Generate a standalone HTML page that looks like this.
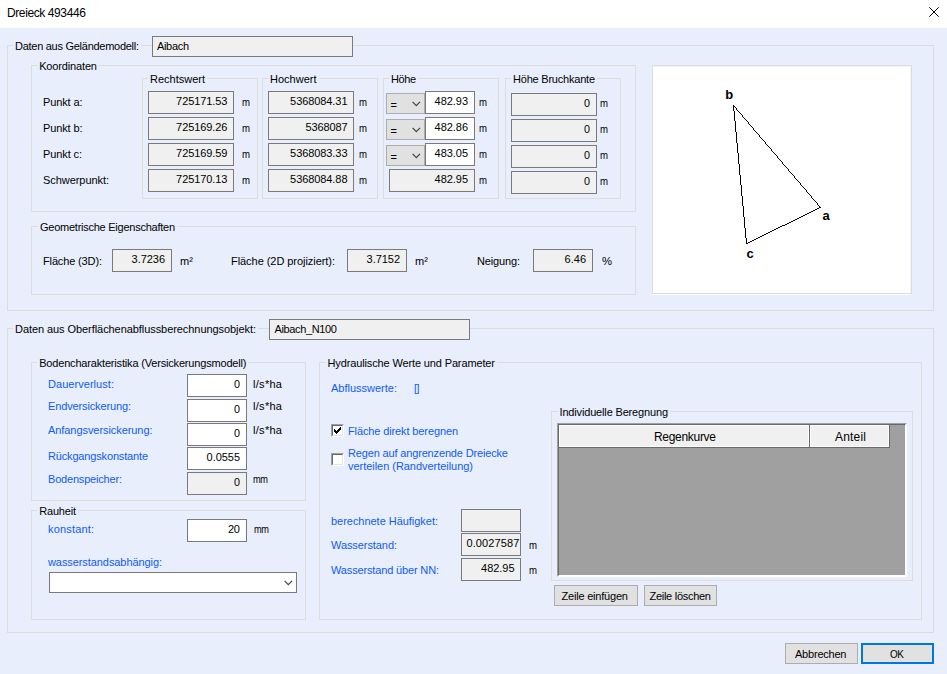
<!DOCTYPE html>
<html lang="de"><head><meta charset="utf-8"><title>Dreieck 493446</title>
<style>
html,body{margin:0;padding:0}
body{width:947px;height:674px;background:#e8eefc;position:relative;overflow:hidden;font-family:'Liberation Sans',sans-serif;font-size:11px;color:#000}
.b{position:absolute;box-sizing:content-box}
.t{position:absolute;white-space:nowrap;display:block}
.hd{background:#f0f0f0;border:1px solid #fff;outline:0;box-shadow:1px 0 0 0 #696969,0 1px 0 0 #696969,1px 1px 0 0 #696969}
.cbo{width:11px;height:11px;border-style:solid;border-width:1px;border-color:#a0a0a0 #fff #fff #a0a0a0}
.cb{width:9px;height:9px;background:#fff;border-style:solid;border-width:1px;border-color:#696969 #e3e3e3 #e3e3e3 #696969}
</style></head>
<body>
<div class="b" style="left:0;top:0;width:947px;height:28px;background:#fff"></div>
<svg class="b" style="left:929px;top:7px" width="10" height="10" viewBox="0 0 10 10"><path d="M0.3 0.3 L9.7 9.7 M9.7 0.3 L0.3 9.7" stroke="#000" stroke-width="1" fill="none"/></svg>
<div class="b" style="left:7px;top:45px;width:925px;height:264px;border:1px solid #dcdcdc;"></div>
<div class="b" style="left:152px;top:36px;width:199px;height:19px;background:#f0f0f0;border:1px solid #7a7a7a;"></div>
<div class="b" style="left:31px;top:65px;width:603px;height:145px;border:1px solid #dcdcdc;"></div>
<div class="b" style="left:142px;top:78px;width:114px;height:119px;border:1px solid #dcdcdc;"></div>
<div class="b" style="left:262px;top:78px;width:114px;height:119px;border:1px solid #dcdcdc;"></div>
<div class="b" style="left:383px;top:78px;width:114px;height:119px;border:1px solid #dcdcdc;"></div>
<div class="b" style="left:505px;top:78px;width:114px;height:119px;border:1px solid #dcdcdc;"></div>
<div class="b" style="left:148px;top:91px;width:84px;height:21px;background:#f0f0f0;border:1px solid #7a7a7a;"></div>
<div class="b" style="left:268px;top:91px;width:84px;height:21px;background:#f0f0f0;border:1px solid #7a7a7a;"></div>
<div class="b" style="left:386px;top:93px;width:37px;height:19px;background:#e1e1e1;border:1px solid #adadad;"></div>
<svg class="b" style="left:411.8px;top:101.2px" width="9" height="6" viewBox="0 0 9 6"><path d="M0.6 0.9 L4.3 4.6 L8 0.9" stroke="#444" stroke-width="1.25" fill="none"/></svg>
<div class="b" style="left:425px;top:91px;width:48px;height:21px;background:#fff;border:1px solid #7a7a7a;"></div>
<div class="b" style="left:511px;top:93px;width:84px;height:21px;background:#f0f0f0;border:1px solid #7a7a7a;"></div>
<div class="b" style="left:148px;top:117px;width:84px;height:21px;background:#f0f0f0;border:1px solid #7a7a7a;"></div>
<div class="b" style="left:268px;top:117px;width:84px;height:21px;background:#f0f0f0;border:1px solid #7a7a7a;"></div>
<div class="b" style="left:386px;top:119px;width:37px;height:19px;background:#e1e1e1;border:1px solid #adadad;"></div>
<svg class="b" style="left:411.8px;top:127.2px" width="9" height="6" viewBox="0 0 9 6"><path d="M0.6 0.9 L4.3 4.6 L8 0.9" stroke="#444" stroke-width="1.25" fill="none"/></svg>
<div class="b" style="left:425px;top:117px;width:48px;height:21px;background:#fff;border:1px solid #7a7a7a;"></div>
<div class="b" style="left:511px;top:119px;width:84px;height:21px;background:#f0f0f0;border:1px solid #7a7a7a;"></div>
<div class="b" style="left:148px;top:143px;width:84px;height:21px;background:#f0f0f0;border:1px solid #7a7a7a;"></div>
<div class="b" style="left:268px;top:143px;width:84px;height:21px;background:#f0f0f0;border:1px solid #7a7a7a;"></div>
<div class="b" style="left:386px;top:145px;width:37px;height:19px;background:#e1e1e1;border:1px solid #adadad;"></div>
<svg class="b" style="left:411.8px;top:153.2px" width="9" height="6" viewBox="0 0 9 6"><path d="M0.6 0.9 L4.3 4.6 L8 0.9" stroke="#444" stroke-width="1.25" fill="none"/></svg>
<div class="b" style="left:425px;top:143px;width:48px;height:21px;background:#fff;border:1px solid #7a7a7a;"></div>
<div class="b" style="left:511px;top:145px;width:84px;height:21px;background:#f0f0f0;border:1px solid #7a7a7a;"></div>
<div class="b" style="left:148px;top:169px;width:84px;height:21px;background:#f0f0f0;border:1px solid #7a7a7a;"></div>
<div class="b" style="left:268px;top:169px;width:84px;height:21px;background:#f0f0f0;border:1px solid #7a7a7a;"></div>
<div class="b" style="left:389px;top:169px;width:84px;height:21px;background:#f0f0f0;border:1px solid #7a7a7a;"></div>
<div class="b" style="left:511px;top:171px;width:84px;height:21px;background:#f0f0f0;border:1px solid #7a7a7a;"></div>
<div class="b" style="left:31px;top:226px;width:603px;height:67px;border:1px solid #dcdcdc;"></div>
<div class="b" style="left:112px;top:249px;width:58px;height:21px;background:#f0f0f0;border:1px solid #7a7a7a;"></div>
<div class="b" style="left:347px;top:249px;width:58px;height:21px;background:#f0f0f0;border:1px solid #7a7a7a;"></div>
<div class="b" style="left:533px;top:249px;width:58px;height:21px;background:#f0f0f0;border:1px solid #7a7a7a;"></div>
<div class="b" style="left:652px;top:65px;width:258px;height:227px;background:#fff;border:1px solid #dcdcdc"></div>
<div class="b" style="left:652px;top:294px;width:258px;height:1px;background:#fff"></div>
<div class="b" style="left:653px;top:66px;width:258px;height:1px;background:#f1f4fd"></div>
<div class="b" style="left:910px;top:66px;width:1px;height:227px;background:#f1f4fd"></div>
<svg class="b" style="left:652px;top:65px" width="260" height="229" viewBox="0 0 260 229" shape-rendering="crispEdges"><path d="M81 40h1v1h-1zM81 41h2v1h-2zM81 42h1v1h-1zM83 42h1v1h-1zM81 43h1v1h-1zM84 43h1v1h-1zM81 44h1v1h-1zM84 44h1v1h-1zM81 45h1v1h-1zM85 45h1v1h-1zM82 46h1v1h-1zM86 46h1v1h-1zM82 47h1v1h-1zM87 47h1v1h-1zM82 48h1v1h-1zM88 48h1v1h-1zM82 49h1v1h-1zM89 49h1v1h-1zM82 50h1v1h-1zM90 50h1v1h-1zM82 51h1v1h-1zM90 51h1v1h-1zM82 52h1v1h-1zM91 52h1v1h-1zM82 53h1v1h-1zM92 53h1v1h-1zM82 54h1v1h-1zM93 54h1v1h-1zM82 55h1v1h-1zM94 55h1v1h-1zM83 56h1v1h-1zM95 56h1v1h-1zM83 57h1v1h-1zM96 57h1v1h-1zM83 58h1v1h-1zM96 58h1v1h-1zM83 59h1v1h-1zM97 59h1v1h-1zM83 60h1v1h-1zM98 60h1v1h-1zM83 61h1v1h-1zM99 61h1v1h-1zM83 62h1v1h-1zM100 62h1v1h-1zM83 63h1v1h-1zM101 63h1v1h-1zM83 64h1v1h-1zM101 64h1v1h-1zM83 65h1v1h-1zM102 65h1v1h-1zM83 66h1v1h-1zM103 66h1v1h-1zM84 67h1v1h-1zM104 67h1v1h-1zM84 68h1v1h-1zM105 68h1v1h-1zM84 69h1v1h-1zM106 69h1v1h-1zM84 70h1v1h-1zM107 70h1v1h-1zM84 71h1v1h-1zM107 71h1v1h-1zM84 72h1v1h-1zM108 72h1v1h-1zM84 73h1v1h-1zM109 73h1v1h-1zM84 74h1v1h-1zM110 74h1v1h-1zM84 75h1v1h-1zM111 75h1v1h-1zM84 76h1v1h-1zM112 76h1v1h-1zM84 77h1v1h-1zM113 77h1v1h-1zM85 78h1v1h-1zM113 78h1v1h-1zM85 79h1v1h-1zM114 79h1v1h-1zM85 80h1v1h-1zM115 80h1v1h-1zM85 81h1v1h-1zM116 81h1v1h-1zM85 82h1v1h-1zM117 82h1v1h-1zM85 83h1v1h-1zM118 83h1v1h-1zM85 84h1v1h-1zM119 84h1v1h-1zM85 85h1v1h-1zM119 85h1v1h-1zM85 86h1v1h-1zM120 86h1v1h-1zM85 87h1v1h-1zM121 87h1v1h-1zM86 88h1v1h-1zM122 88h1v1h-1zM86 89h1v1h-1zM123 89h1v1h-1zM86 90h1v1h-1zM124 90h1v1h-1zM86 91h1v1h-1zM125 91h1v1h-1zM86 92h1v1h-1zM125 92h1v1h-1zM86 93h1v1h-1zM126 93h1v1h-1zM86 94h1v1h-1zM127 94h1v1h-1zM86 95h1v1h-1zM128 95h1v1h-1zM86 96h1v1h-1zM129 96h1v1h-1zM86 97h1v1h-1zM130 97h1v1h-1zM86 98h1v1h-1zM130 98h1v1h-1zM87 99h1v1h-1zM131 99h1v1h-1zM87 100h1v1h-1zM132 100h1v1h-1zM87 101h1v1h-1zM133 101h1v1h-1zM87 102h1v1h-1zM134 102h1v1h-1zM87 103h1v1h-1zM135 103h1v1h-1zM87 104h1v1h-1zM136 104h1v1h-1zM87 105h1v1h-1zM136 105h1v1h-1zM87 106h1v1h-1zM137 106h1v1h-1zM87 107h1v1h-1zM138 107h1v1h-1zM87 108h1v1h-1zM139 108h1v1h-1zM87 109h1v1h-1zM140 109h1v1h-1zM88 110h1v1h-1zM141 110h1v1h-1zM88 111h1v1h-1zM142 111h1v1h-1zM88 112h1v1h-1zM142 112h1v1h-1zM88 113h1v1h-1zM143 113h1v1h-1zM88 114h1v1h-1zM144 114h1v1h-1zM88 115h1v1h-1zM145 115h1v1h-1zM88 116h1v1h-1zM146 116h1v1h-1zM88 117h1v1h-1zM147 117h1v1h-1zM88 118h1v1h-1zM148 118h1v1h-1zM88 119h1v1h-1zM148 119h1v1h-1zM89 120h1v1h-1zM149 120h1v1h-1zM89 121h1v1h-1zM150 121h1v1h-1zM89 122h1v1h-1zM151 122h1v1h-1zM89 123h1v1h-1zM152 123h1v1h-1zM89 124h1v1h-1zM153 124h1v1h-1zM89 125h1v1h-1zM154 125h1v1h-1zM89 126h1v1h-1zM154 126h1v1h-1zM89 127h1v1h-1zM155 127h1v1h-1zM89 128h1v1h-1zM156 128h1v1h-1zM89 129h1v1h-1zM157 129h1v1h-1zM89 130h1v1h-1zM158 130h1v1h-1zM90 131h1v1h-1zM159 131h1v1h-1zM90 132h1v1h-1zM159 132h1v1h-1zM90 133h1v1h-1zM160 133h1v1h-1zM90 134h1v1h-1zM161 134h1v1h-1zM90 135h1v1h-1zM162 135h1v1h-1zM90 136h1v1h-1zM163 136h1v1h-1zM90 137h1v1h-1zM164 137h1v1h-1zM90 138h1v1h-1zM165 138h1v1h-1zM90 139h1v1h-1zM165 139h1v1h-1zM90 140h1v1h-1zM166 140h1v1h-1zM91 141h1v1h-1zM167 141h1v1h-1zM91 142h1v1h-1zM167 142h2v1h-2zM91 143h1v1h-1zM165 143h2v1h-2zM91 144h1v1h-1zM163 144h2v1h-2zM91 145h1v1h-1zM161 145h2v1h-2zM91 146h1v1h-1zM159 146h2v1h-2zM91 147h1v1h-1zM157 147h2v1h-2zM91 148h1v1h-1zM155 148h2v1h-2zM91 149h1v1h-1zM153 149h2v1h-2zM91 150h1v1h-1zM151 150h2v1h-2zM91 151h1v1h-1zM149 151h2v1h-2zM92 152h1v1h-1zM147 152h2v1h-2zM92 153h1v1h-1zM145 153h2v1h-2zM92 154h1v1h-1zM143 154h2v1h-2zM92 155h1v1h-1zM141 155h2v1h-2zM92 156h1v1h-1zM139 156h2v1h-2zM92 157h1v1h-1zM137 157h2v1h-2zM92 158h1v1h-1zM135 158h2v1h-2zM92 159h1v1h-1zM133 159h2v1h-2zM92 160h1v1h-1zM130 160h3v1h-3zM92 161h1v1h-1zM128 161h2v1h-2zM92 162h1v1h-1zM126 162h2v1h-2zM93 163h1v1h-1zM124 163h2v1h-2zM93 164h1v1h-1zM122 164h2v1h-2zM93 165h1v1h-1zM120 165h2v1h-2zM93 166h1v1h-1zM118 166h2v1h-2zM93 167h1v1h-1zM116 167h2v1h-2zM93 168h1v1h-1zM114 168h2v1h-2zM93 169h1v1h-1zM112 169h2v1h-2zM93 170h1v1h-1zM110 170h2v1h-2zM93 171h1v1h-1zM108 171h2v1h-2zM93 172h1v1h-1zM106 172h2v1h-2zM94 173h1v1h-1zM104 173h2v1h-2zM94 174h1v1h-1zM102 174h2v1h-2zM94 175h1v1h-1zM100 175h2v1h-2zM94 176h1v1h-1zM98 176h2v1h-2zM94 177h1v1h-1zM96 177h2v1h-2zM94 178h2v1h-2z" fill="#000"/></svg>
<div class="b" style="left:7px;top:328px;width:925px;height:303px;border:1px solid #dcdcdc;"></div>
<div class="b" style="left:269px;top:319px;width:199px;height:19px;background:#f0f0f0;border:1px solid #7a7a7a;"></div>
<div class="b" style="left:31px;top:362px;width:273px;height:137px;border:1px solid #dcdcdc;"></div>
<div class="b" style="left:187px;top:374px;width:58px;height:21px;background:#fff;border:1px solid #7a7a7a;"></div>
<div class="b" style="left:187px;top:399px;width:58px;height:21px;background:#fff;border:1px solid #7a7a7a;"></div>
<div class="b" style="left:187px;top:423px;width:58px;height:21px;background:#fff;border:1px solid #7a7a7a;"></div>
<div class="b" style="left:187px;top:447px;width:58px;height:21px;background:#fff;border:1px solid #7a7a7a;"></div>
<div class="b" style="left:187px;top:472px;width:58px;height:21px;background:#f0f0f0;border:1px solid #7a7a7a;"></div>
<div class="b" style="left:31px;top:510px;width:273px;height:108px;border:1px solid #dcdcdc;"></div>
<div class="b" style="left:187px;top:519px;width:58px;height:21px;background:#fff;border:1px solid #7a7a7a;"></div>
<div class="b" style="left:49px;top:572px;width:246px;height:19px;background:#fff;border:1px solid #7a7a7a;"></div>
<svg class="b" style="left:283.8px;top:580px" width="9" height="6" viewBox="0 0 9 6"><path d="M0.6 0.9 L4.3 4.6 L8 0.9" stroke="#444" stroke-width="1.25" fill="none"/></svg>
<div class="b" style="left:319px;top:362px;width:601px;height:256px;border:1px solid #dcdcdc;"></div>
<div class="b cbo" style="left:331px;top:424px"><div class="cb"></div></div>
<svg class="b" style="left:334px;top:427px" width="7" height="7" viewBox="0 0 7 7" shape-rendering="crispEdges"><path d="M0 2 v3 M1 3 v3 M2 4 v3 M3 3 v3 M4 2 v3 M5 1 v3 M6 0 v3" stroke="#000" stroke-width="1" fill="none" transform="translate(0.5,0)"/></svg>
<div class="b cbo" style="left:331px;top:453px"><div class="cb"></div></div>
<div class="b" style="left:461px;top:509px;width:58px;height:21px;background:#f0f0f0;border:1px solid #7a7a7a;"></div>
<div class="b" style="left:461px;top:533px;width:58px;height:21px;background:#f0f0f0;border:1px solid #7a7a7a;"></div>
<div class="b" style="left:461px;top:558px;width:58px;height:21px;background:#f0f0f0;border:1px solid #7a7a7a;"></div>
<div class="b" style="left:551px;top:411px;width:360px;height:168px;border:1px solid #dcdcdc;"></div>
<div class="b" style="left:557px;top:423px;width:348px;height:152px;border-style:solid;border-width:1px;border-color:#a0a0a0 #fff #fff #a0a0a0;"><div style="width:346px;height:150px;background:#a0a0a0;border-style:solid;border-width:1px;border-color:#696969 #fff #fff #696969;"></div></div>
<div class="b hd" style="left:559px;top:425px;width:248px;height:20px;"></div>
<div class="b hd" style="left:810px;top:425px;width:77px;height:20px;"></div>
<div class="b" style="left:554px;top:585px;width:82px;height:19px;background:#e1e1e1;border:1px solid #adadad;"></div>
<div class="b" style="left:644px;top:585px;width:71px;height:19px;background:#e1e1e1;border:1px solid #adadad;"></div>
<div class="b" style="left:785px;top:643px;width:71px;height:19px;background:#e1e1e1;border:1px solid #adadad;"></div>
<div class="b" style="left:861px;top:643px;width:69px;height:17px;background:#e1e1e1;border:2px solid #0078d7"></div>
<span class="t" style="font-size:12px;letter-spacing:-0.400px;color:#000;line-height:16px;height:16px;top:4.5px;left:7.00px;">Dreieck 493446</span>
<span class="t" style="font-size:11px;letter-spacing:-0.272px;color:#000;line-height:14px;height:14px;top:39.0px;background:#e8eefc;padding:0 2px;left:13.00px;">Daten aus Geländemodell:</span>
<span class="t" style="font-size:11px;letter-spacing:-0.328px;color:#000;line-height:14px;height:14px;top:39.0px;left:157.00px;">Aibach</span>
<span class="t" style="font-size:11px;letter-spacing:-0.153px;color:#000;line-height:14px;height:14px;top:59.0px;background:#e8eefc;padding:0 2px;left:37.20px;">Koordinaten</span>
<span class="t" style="font-size:11px;letter-spacing:-0.003px;color:#000;line-height:14px;height:14px;top:72.0px;background:#e8eefc;padding:0 2px;left:148.00px;">Rechtswert</span>
<span class="t" style="font-size:11px;letter-spacing:0.004px;color:#000;line-height:14px;height:14px;top:72.0px;background:#e8eefc;padding:0 2px;left:268.00px;">Hochwert</span>
<span class="t" style="font-size:11px;letter-spacing:-0.400px;color:#000;line-height:14px;height:14px;top:72.0px;background:#e8eefc;padding:0 2px;left:389.00px;">Höhe</span>
<span class="t" style="font-size:11px;letter-spacing:-0.214px;color:#000;line-height:14px;height:14px;top:72.0px;background:#e8eefc;padding:0 2px;left:511.00px;">Höhe Bruchkante</span>
<span class="t" style="font-size:11px;letter-spacing:-0.123px;color:#000;line-height:14px;height:14px;top:95.0px;left:43.00px;">Punkt a:</span>
<span class="t" style="font-size:11px;letter-spacing:-0.075px;color:#000;line-height:14px;height:14px;top:94.0px;right:719.58px;">725171.53</span>
<span class="t" style="font-size:11px;color:#000;line-height:14px;height:14px;top:95.0px;left:241.50px;transform:scaleX(0.8722);transform-origin:left center;">m</span>
<span class="t" style="font-size:11px;letter-spacing:-0.081px;color:#000;line-height:14px;height:14px;top:94.0px;right:599.58px;">5368084.31</span>
<span class="t" style="font-size:11px;color:#000;line-height:14px;height:14px;top:95.0px;left:359.00px;transform:scaleX(0.8722);transform-origin:left center;">m</span>
<span class="t" style="font-size:11px;color:#000;line-height:14px;height:14px;top:97.5px;left:390.50px;">=</span>
<span class="t" style="font-size:11px;letter-spacing:-0.051px;color:#000;line-height:14px;height:14px;top:94.0px;right:479.05px;">482.93</span>
<span class="t" style="font-size:11px;color:#000;line-height:14px;height:14px;top:95.0px;left:478.50px;transform:scaleX(0.8722);transform-origin:left center;">m</span>
<span class="t" style="font-size:11px;color:#000;line-height:14px;height:14px;top:96.0px;right:357.00px;transform:scaleX(0.9796);transform-origin:right center;">0</span>
<span class="t" style="font-size:11px;color:#000;line-height:14px;height:14px;top:96.0px;left:600.00px;transform:scaleX(0.8722);transform-origin:left center;">m</span>
<span class="t" style="font-size:11px;letter-spacing:-0.123px;color:#000;line-height:14px;height:14px;top:121.0px;left:43.00px;">Punkt b:</span>
<span class="t" style="font-size:11px;letter-spacing:-0.075px;color:#000;line-height:14px;height:14px;top:120.0px;right:719.58px;">725169.26</span>
<span class="t" style="font-size:11px;color:#000;line-height:14px;height:14px;top:121.0px;left:241.50px;transform:scaleX(0.8722);transform-origin:left center;">m</span>
<span class="t" style="font-size:11px;letter-spacing:-0.138px;color:#000;line-height:14px;height:14px;top:120.0px;right:599.64px;">5368087</span>
<span class="t" style="font-size:11px;color:#000;line-height:14px;height:14px;top:121.0px;left:359.00px;transform:scaleX(0.8722);transform-origin:left center;">m</span>
<span class="t" style="font-size:11px;color:#000;line-height:14px;height:14px;top:123.5px;left:390.50px;">=</span>
<span class="t" style="font-size:11px;letter-spacing:-0.051px;color:#000;line-height:14px;height:14px;top:120.0px;right:479.05px;">482.86</span>
<span class="t" style="font-size:11px;color:#000;line-height:14px;height:14px;top:121.0px;left:478.50px;transform:scaleX(0.8722);transform-origin:left center;">m</span>
<span class="t" style="font-size:11px;color:#000;line-height:14px;height:14px;top:122.0px;right:357.00px;transform:scaleX(0.9796);transform-origin:right center;">0</span>
<span class="t" style="font-size:11px;color:#000;line-height:14px;height:14px;top:122.0px;left:600.00px;transform:scaleX(0.8722);transform-origin:left center;">m</span>
<span class="t" style="font-size:11px;letter-spacing:-0.107px;color:#000;line-height:14px;height:14px;top:147.0px;left:43.00px;">Punkt c:</span>
<span class="t" style="font-size:11px;letter-spacing:-0.075px;color:#000;line-height:14px;height:14px;top:146.0px;right:719.58px;">725169.59</span>
<span class="t" style="font-size:11px;color:#000;line-height:14px;height:14px;top:147.0px;left:241.50px;transform:scaleX(0.8722);transform-origin:left center;">m</span>
<span class="t" style="font-size:11px;letter-spacing:-0.081px;color:#000;line-height:14px;height:14px;top:146.0px;right:599.58px;">5368083.33</span>
<span class="t" style="font-size:11px;color:#000;line-height:14px;height:14px;top:147.0px;left:359.00px;transform:scaleX(0.8722);transform-origin:left center;">m</span>
<span class="t" style="font-size:11px;color:#000;line-height:14px;height:14px;top:149.5px;left:390.50px;">=</span>
<span class="t" style="font-size:11px;letter-spacing:-0.051px;color:#000;line-height:14px;height:14px;top:146.0px;right:479.05px;">483.05</span>
<span class="t" style="font-size:11px;color:#000;line-height:14px;height:14px;top:147.0px;left:478.50px;transform:scaleX(0.8722);transform-origin:left center;">m</span>
<span class="t" style="font-size:11px;color:#000;line-height:14px;height:14px;top:148.0px;right:357.00px;transform:scaleX(0.9796);transform-origin:right center;">0</span>
<span class="t" style="font-size:11px;color:#000;line-height:14px;height:14px;top:148.0px;left:600.00px;transform:scaleX(0.8722);transform-origin:left center;">m</span>
<span class="t" style="font-size:11px;letter-spacing:-0.060px;color:#000;line-height:14px;height:14px;top:173.0px;left:43.00px;">Schwerpunkt:</span>
<span class="t" style="font-size:11px;letter-spacing:-0.075px;color:#000;line-height:14px;height:14px;top:172.0px;right:719.58px;">725170.13</span>
<span class="t" style="font-size:11px;color:#000;line-height:14px;height:14px;top:173.0px;left:241.50px;transform:scaleX(0.8722);transform-origin:left center;">m</span>
<span class="t" style="font-size:11px;letter-spacing:-0.081px;color:#000;line-height:14px;height:14px;top:172.0px;right:599.58px;">5368084.88</span>
<span class="t" style="font-size:11px;color:#000;line-height:14px;height:14px;top:173.0px;left:359.00px;transform:scaleX(0.8722);transform-origin:left center;">m</span>
<span class="t" style="font-size:11px;letter-spacing:-0.051px;color:#000;line-height:14px;height:14px;top:172.0px;right:479.05px;">482.95</span>
<span class="t" style="font-size:11px;color:#000;line-height:14px;height:14px;top:173.0px;left:478.50px;transform:scaleX(0.8722);transform-origin:left center;">m</span>
<span class="t" style="font-size:11px;color:#000;line-height:14px;height:14px;top:174.0px;right:357.00px;transform:scaleX(0.9796);transform-origin:right center;">0</span>
<span class="t" style="font-size:11px;color:#000;line-height:14px;height:14px;top:174.0px;left:600.00px;transform:scaleX(0.8722);transform-origin:left center;">m</span>
<span class="t" style="font-size:11px;letter-spacing:-0.250px;color:#000;line-height:14px;height:14px;top:220.0px;background:#e8eefc;padding:0 2px;left:38.00px;">Geometrische Eigenschaften</span>
<span class="t" style="font-size:11px;letter-spacing:-0.139px;color:#000;line-height:14px;height:14px;top:253.5px;left:43.00px;">Fläche (3D):</span>
<span class="t" style="font-size:11px;letter-spacing:-0.051px;color:#000;line-height:14px;height:14px;top:252.0px;right:782.05px;">3.7236</span>
<span class="t" style="font-size:11px;letter-spacing:0.172px;color:#000;line-height:14px;height:14px;top:253.5px;left:180.00px;">m²</span>
<span class="t" style="font-size:11px;letter-spacing:-0.052px;color:#000;line-height:14px;height:14px;top:253.5px;left:231.00px;">Fläche (2D projiziert):</span>
<span class="t" style="font-size:11px;letter-spacing:-0.051px;color:#000;line-height:14px;height:14px;top:252.0px;right:547.05px;">3.7152</span>
<span class="t" style="font-size:11px;letter-spacing:0.172px;color:#000;line-height:14px;height:14px;top:253.5px;left:415.00px;">m²</span>
<span class="t" style="font-size:11px;letter-spacing:-0.150px;color:#000;line-height:14px;height:14px;top:253.5px;left:477.00px;">Neigung:</span>
<span class="t" style="font-size:11px;letter-spacing:-0.007px;color:#000;line-height:14px;height:14px;top:252.0px;right:361.01px;">6.46</span>
<span class="t" style="font-size:11px;color:#000;line-height:14px;height:14px;top:253.5px;left:601.50px;transform:scaleX(1.0224);transform-origin:left center;">%</span>
<span class="t" style="font-size:13px;font-weight:bold;color:#000;line-height:16px;height:16px;top:87.2px;left:725.30px;">b</span>
<span class="t" style="font-size:13px;font-weight:bold;color:#000;line-height:16px;height:16px;top:207.5px;left:822.60px;">a</span>
<span class="t" style="font-size:13px;font-weight:bold;color:#000;line-height:16px;height:16px;top:245.5px;left:746.60px;">c</span>
<span class="t" style="font-size:11px;letter-spacing:-0.067px;color:#000;line-height:14px;height:14px;top:322.0px;background:#e8eefc;padding:0 2px;left:13.00px;">Daten aus Oberflächenabflussberechnungsobjekt:</span>
<span class="t" style="font-size:11px;letter-spacing:-0.356px;color:#000;line-height:14px;height:14px;top:322.0px;left:274.50px;">Aibach_N100</span>
<span class="t" style="font-size:11px;letter-spacing:-0.178px;color:#000;line-height:14px;height:14px;top:356.0px;background:#e8eefc;padding:0 2px;left:37.20px;">Bodencharakteristika (Versickerungsmodell)</span>
<span class="t" style="font-size:11px;letter-spacing:0.048px;color:#0f5cf5;line-height:14px;height:14px;top:377.0px;left:48.00px;">Dauerverlust:</span>
<span class="t" style="font-size:11px;color:#000;line-height:14px;height:14px;top:377.0px;right:707.00px;transform:scaleX(0.9796);transform-origin:right center;">0</span>
<span class="t" style="font-size:11px;letter-spacing:0.294px;color:#000;line-height:14px;height:14px;top:377.0px;left:253.00px;">l/s*ha</span>
<span class="t" style="font-size:11px;letter-spacing:-0.133px;color:#0f5cf5;line-height:14px;height:14px;top:399.0px;left:48.00px;">Endversickerung:</span>
<span class="t" style="font-size:11px;color:#000;line-height:14px;height:14px;top:402.0px;right:707.00px;transform:scaleX(0.9796);transform-origin:right center;">0</span>
<span class="t" style="font-size:11px;letter-spacing:0.294px;color:#000;line-height:14px;height:14px;top:399.0px;left:253.00px;">l/s*ha</span>
<span class="t" style="font-size:11px;letter-spacing:-0.067px;color:#0f5cf5;line-height:14px;height:14px;top:423.0px;left:48.00px;">Anfangsversickerung:</span>
<span class="t" style="font-size:11px;color:#000;line-height:14px;height:14px;top:426.0px;right:707.00px;transform:scaleX(0.9796);transform-origin:right center;">0</span>
<span class="t" style="font-size:11px;letter-spacing:0.294px;color:#000;line-height:14px;height:14px;top:423.0px;left:253.00px;">l/s*ha</span>
<span class="t" style="font-size:11px;letter-spacing:-0.161px;color:#0f5cf5;line-height:14px;height:14px;top:449.0px;left:48.00px;">Rückgangskonstante</span>
<span class="t" style="font-size:11px;letter-spacing:-0.051px;color:#000;line-height:14px;height:14px;top:450.0px;right:707.05px;">0.0555</span>
<span class="t" style="font-size:11px;letter-spacing:-0.189px;color:#0f5cf5;line-height:14px;height:14px;top:472.0px;left:48.00px;">Bodenspeicher:</span>
<span class="t" style="font-size:11px;color:#000;line-height:14px;height:14px;top:475.0px;right:707.00px;transform:scaleX(0.9796);transform-origin:right center;">0</span>
<span class="t" style="font-size:11px;letter-spacing:-0.400px;color:#000;line-height:14px;height:14px;top:472.0px;left:253.00px;transform:scaleX(0.8367);transform-origin:left center;">mm</span>
<span class="t" style="font-size:11px;letter-spacing:-0.187px;color:#000;line-height:14px;height:14px;top:503.5px;background:#e8eefc;padding:0 2px;left:37.20px;">Rauheit</span>
<span class="t" style="font-size:11px;letter-spacing:0.170px;color:#0f5cf5;line-height:14px;height:14px;top:521.5px;left:48.00px;">konstant:</span>
<span class="t" style="font-size:11px;letter-spacing:-0.250px;color:#000;line-height:14px;height:14px;top:522.0px;right:707.25px;">20</span>
<span class="t" style="font-size:11px;letter-spacing:-0.400px;color:#000;line-height:14px;height:14px;top:522.0px;left:254.00px;transform:scaleX(0.8367);transform-origin:left center;">mm</span>
<span class="t" style="font-size:11px;letter-spacing:-0.079px;color:#0f5cf5;line-height:14px;height:14px;top:554.5px;left:48.00px;">wasserstandsabhängig:</span>
<span class="t" style="font-size:11px;letter-spacing:-0.133px;color:#000;line-height:14px;height:14px;top:356.0px;background:#e8eefc;padding:0 2px;left:325.50px;">Hydraulische Werte und Parameter</span>
<span class="t" style="font-size:11px;letter-spacing:-0.003px;color:#0f5cf5;line-height:14px;height:14px;top:381.0px;left:331.00px;">Abflusswerte:</span>
<span class="t" style="font-size:11px;letter-spacing:-0.400px;color:#0f5cf5;line-height:14px;height:14px;top:381.0px;left:414.00px;transform:scaleX(0.9607);transform-origin:left center;">[]</span>
<span class="t" style="font-size:11px;letter-spacing:-0.120px;color:#0f5cf5;line-height:14px;height:14px;top:424.0px;left:348.00px;">Fläche direkt beregnen</span>
<span class="t" style="font-size:11px;letter-spacing:-0.156px;color:#0f5cf5;line-height:14px;height:14px;top:446.0px;left:348.00px;">Regen auf angrenzende Dreiecke</span>
<span class="t" style="font-size:11px;letter-spacing:-0.038px;color:#0f5cf5;line-height:14px;height:14px;top:458.5px;left:348.00px;">verteilen (Randverteilung)</span>
<span class="t" style="font-size:11px;letter-spacing:-0.032px;color:#0f5cf5;line-height:14px;height:14px;top:514.0px;left:331.00px;">berechnete Häufigket:</span>
<span class="t" style="font-size:11px;letter-spacing:-0.077px;color:#0f5cf5;line-height:14px;height:14px;top:537.5px;left:331.00px;">Wasserstand:</span>
<span class="t" style="font-size:11px;letter-spacing:-0.150px;color:#0f5cf5;line-height:14px;height:14px;top:563.0px;left:331.00px;">Wasserstand über NN:</span>
<span class="t" style="font-size:11px;letter-spacing:0.100px;color:#000;line-height:14px;height:14px;top:536.0px;left:466.50px;">0.0027587</span>
<span class="t" style="font-size:11px;letter-spacing:-0.051px;color:#000;line-height:14px;height:14px;top:561.0px;right:432.55px;">482.95</span>
<span class="t" style="font-size:11px;color:#000;line-height:14px;height:14px;top:538.0px;left:528.50px;transform:scaleX(0.8722);transform-origin:left center;">m</span>
<span class="t" style="font-size:11px;color:#000;line-height:14px;height:14px;top:563.0px;left:528.50px;transform:scaleX(0.8722);transform-origin:left center;">m</span>
<span class="t" style="font-size:11px;letter-spacing:-0.163px;color:#000;line-height:14px;height:14px;top:404.5px;background:#e8eefc;padding:0 2px;left:557.50px;">Individuelle Beregnung</span>
<span class="t" style="font-size:12px;letter-spacing:-0.302px;color:#000;line-height:16px;height:16px;top:428.5px;left:654.00px;">Regenkurve</span>
<span class="t" style="font-size:12px;letter-spacing:0.194px;color:#000;line-height:16px;height:16px;top:428.5px;left:835.00px;">Anteil</span>
<span class="t" style="font-size:11px;letter-spacing:-0.201px;color:#000;line-height:14px;height:14px;top:588.5px;left:561.50px;">Zeile einfügen</span>
<span class="t" style="font-size:11px;letter-spacing:-0.277px;color:#000;line-height:14px;height:14px;top:588.5px;left:649.50px;">Zeile löschen</span>
<span class="t" style="font-size:11px;letter-spacing:-0.215px;color:#000;line-height:14px;height:14px;top:646.5px;left:795.00px;">Abbrechen</span>
<span class="t" style="font-size:11px;letter-spacing:-0.400px;color:#000;line-height:14px;height:14px;top:646.5px;left:890.00px;transform:scaleX(0.9029);transform-origin:left center;">OK</span>
</body></html>
